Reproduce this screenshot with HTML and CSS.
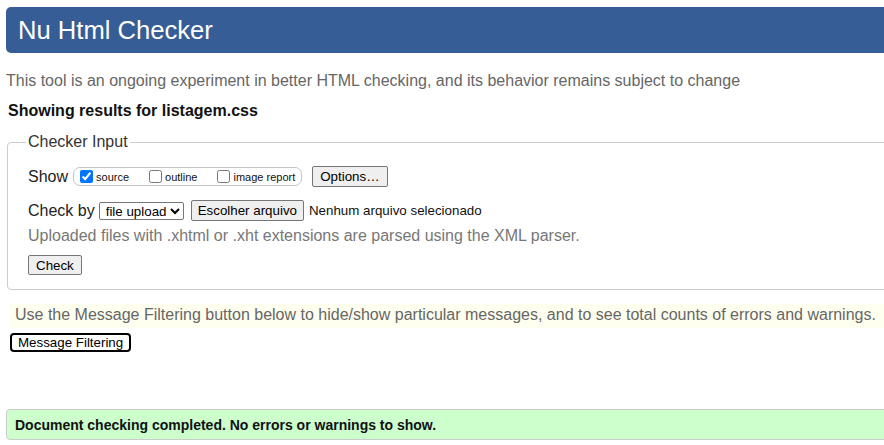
FILE: index.html
```html
<!DOCTYPE html>
<html lang="en">
<head>
<meta charset="utf-8">
<title>Nu Html Checker</title>
<link rel="stylesheet" href="styles.css">
</head>
<body>
<div class="page">
  <h1 class="banner">Nu Html Checker</h1>
  <p class="intro">This tool is an ongoing experiment in better HTML checking, and its behavior remains subject to change</p>
  <p class="showing">Showing results for listagem.css</p>
  <fieldset class="checker">
    <legend class="checker-legend">Checker Input</legend>
    <div class="row">
      <span class="label">Show</span>
      <span class="show-box">
        <label class="opt"><input type="checkbox" class="cb" checked>source</label>
        <label class="opt"><input type="checkbox" class="cb">outline</label>
        <label class="opt"><input type="checkbox" class="cb">image report</label>
      </span>
      <button class="btn btn-options" type="button">Options…</button>
    </div>
    <div class="row row-check-by">
      <span class="label">Check by</span>
      <select class="sel">
        <option>file upload</option>
      </select>
      <button class="btn btn-file" type="button">Escolher arquivo</button>
      <span class="nofile">Nenhum arquivo selecionado</span>
    </div>
    <p class="note">Uploaded files with .xhtml or .xht extensions are parsed using the XML parser.</p>
    <div class="row row-submit">
      <button class="btn" type="button">Check</button>
    </div>
  </fieldset>
  <p class="filter-note">Use the Message Filtering button below to hide/show particular messages, and to see total counts of errors and warnings.</p>
  <button class="btn-filter" type="button">Message Filtering</button>
  <div class="success">Document checking completed. No errors or warnings to show.</div>
</div>
</body>
</html>
```
FILE: styles.css
```css
html, body {
  margin: 0;
  padding: 0;
  overflow: hidden;
  background: #fff;
}
body {
  font-family: "Liberation Sans", Arial, sans-serif;
  font-size: 16px;
  line-height: 18px;
  color: #000;
}
.page {
  padding-left: 6px;
  margin-right: -40px;
}
.banner {
  margin: 7px 0 0 0;
  height: 46px;
  line-height: 46px;
  padding-left: 12px;
  font-size: 25.6px;
  font-weight: normal;
  color: #fff;
  background: #365d95;
  border-radius: 5px;
}
.intro {
  margin: 19px 0 0 0;
  color: #666;
}
.showing {
  margin: 12px 0 0 2px;
  font-weight: bold;
  color: #111;
}
.checker {
  margin: 13px 0 0 1px;
  padding: 15px 0 14px 20px;
  border: 1px solid #ccc;
  border-radius: 4px;
}
.checker-legend {
  padding: 0 2px;
  margin-left: -2px;
  color: #333;
  line-height: 18px;
}
.row {
  display: flex;
  align-items: center;
  height: 21px;
}
.label {
  color: #222;
}
.show-box {
  display: inline-flex;
  align-items: center;
  height: 17px;
  margin-left: 5px;
  padding: 0 6px 0 2px;
  border: 1px solid #c4c4c4;
  border-radius: 7px;
  gap: 16px;
}
.opt {
  display: inline-flex;
  align-items: center;
  font-size: 11px;
  color: #111;
}
.cb {
  width: 13px;
  height: 13px;
  margin: 0 3px 0 4px;
}
.btn {
  font-family: "Liberation Sans", Arial, sans-serif;
  font-size: 13.33px;
  line-height: 15px;
  color: #000;
  background: #efefef;
  border: 1px solid #767676;
  border-radius: 2px;
  padding: 2px 7px;
  height: 21px;
}
.btn-options {
  margin-left: 10px;
}
.row-check-by {
  margin-top: 13px;
}
.sel {
  font-family: "Liberation Sans", Arial, sans-serif;
  font-size: 13.33px;
  height: 18px;
  width: 85px;
  margin-left: 4px;
  padding: 0 0 0 2px;
  border: 1px solid #767676;
  border-radius: 2px;
  background: #fff;
  color: #000;
}
.btn-file {
  margin-left: 7px;
  padding: 2px 6px;
}
.nofile {
  margin-left: 5px;
  font-size: 13.33px;
  color: #111;
}
.note {
  margin: 6px 0 0 0;
  color: #777;
}
.row-submit {
  margin-top: 10px;
  height: 20px;
}
.row-submit .btn {
  height: 20px;
  padding: 1px 7px;
}
.filter-note {
  margin: 14px 0 0 4px;
  padding: 2px 0 4px 5px;
  background: #fffff0;
  color: #666;
}
.btn-filter {
  display: block;
  margin: 5px 0 0 4px;
  height: 19px;
  padding: 0 6px;
  font-family: "Liberation Sans", Arial, sans-serif;
  font-size: 13.33px;
  line-height: 15px;
  color: #000;
  background: #fff;
  border: 2px solid #000;
  border-radius: 4px;
}
.success {
  margin-top: 57px;
  padding: 7px 8px 6px;
  line-height: 16px;
  font-size: 14px;
  font-weight: bold;
  color: #111;
  background: #ccffcc;
  border: 1px solid #ccc;
  border-radius: 4px;
}
```
